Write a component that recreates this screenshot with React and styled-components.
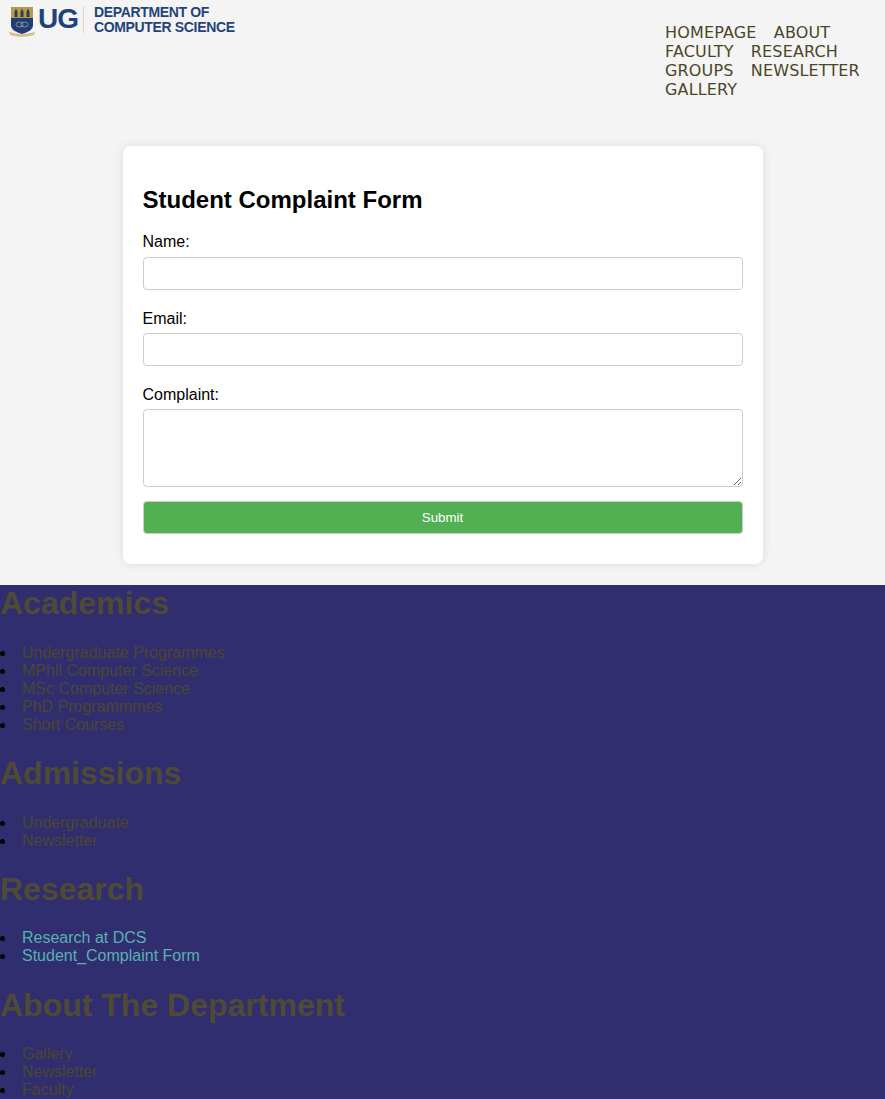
import React from 'react'
import styled, { createGlobalStyle } from 'styled-components'

const navLinks = ['HOMEPAGE', 'ABOUT', 'FACULTY', 'RESEARCH', 'GROUPS', 'NEWSLETTER', 'GALLERY']

const footerSections = [
    {
        title: 'Academics',
        links: ['Undergraduate Programmes', 'MPhil Computer Science', 'MSc Computer Science', 'PhD Programmmes', 'Short Courses'],
    },
    { title: 'Admissions', links: ['Undergraduate', 'Newsletter'] },
    { title: 'Research', links: ['Research at DCS', 'Student_Complaint Form'], visited: true },
    { title: 'About The Department', links: ['Gallery', 'Newsletter', 'Faculty'] },
]

function Crest() {
    return (
        <svg width="26" height="31" viewBox="0 0 26 31">
            <path d="M2 1h22v18c0 5-5 7-11 9C7 26 2 24 2 19z" fill="#1f3f73" />
            <path d="M2 1h22v11H2z" fill="#b79a4e" />
            <path d="M5.500 11V6L7 2.500 8.500 6v5zM11.500 11V6L13 2.500 14.500 6v5zM17.500 11V6L19 2.500 20.500 6v5z" fill="#2b3c55" />
            <ellipse cx="10.500" cy="18.500" rx="3.500" ry="2.500" fill="none" stroke="#7f8ca6" strokeWidth="1" />
            <ellipse cx="15.500" cy="18.500" rx="3.500" ry="2.500" fill="none" stroke="#7f8ca6" strokeWidth="1" />
            <path d="M0 25.500c3 1.500 8 2.500 13 2.500s10-1 13-2.500l-1 3.500c-3 1.200-8 1.800-12 1.800S4 30.200 1 29z" fill="#d8c08a" />
        </svg>
    )
}

function App() {
    return (
        <Page>
            <GlobalStyle />
            <Header>
                <Logo href="#">
                    <Crest />
                    <LogoMark>UG</LogoMark>
                    <LogoRule />
                    <LogoName>DEPARTMENT OF<br />COMPUTER SCIENCE</LogoName>
                </Logo>
                <Nav>
                    {navLinks.map((link) => (
                        <React.Fragment key={link}>
                            <NavLink href="#">{link}</NavLink>{' '}
                        </React.Fragment>
                    ))}
                </Nav>
            </Header>

            <Main>
                <Card>
                    <Title>Student Complaint Form</Title>
                    <form>
                        <Label htmlFor="name">Name:</Label>
                        <Input id="name" type="text" />
                        <Label htmlFor="email">Email:</Label>
                        <Input id="email" type="email" />
                        <Label htmlFor="complaint">Complaint:</Label>
                        <TextArea id="complaint" />
                        <Submit type="button">Submit</Submit>
                    </form>
                </Card>
            </Main>

            <Footer>
                {footerSections.map((section) => (
                    <section key={section.title}>
                        <FooterTitle>{section.title}</FooterTitle>
                        <FooterList>
                            {section.links.map((link) => (
                                <FooterItem key={link}>
                                    <FooterLink href="#" $visited={section.visited}>{link}</FooterLink>
                                </FooterItem>
                            ))}
                        </FooterList>
                    </section>
                ))}
            </Footer>
        </Page>
    )
}

export default App

const GlobalStyle = createGlobalStyle`
    html, body {
        margin: 0;
        background: #f4f4f4;
        font-family: "Liberation Sans", Arial, sans-serif;
    }
`

const Page = styled.div`
    display: flex;
    flex-direction: column;
    height: 100vh;
    overflow: hidden;
`

const Header = styled.header`
    display: flex;
    justify-content: space-between;
    align-items: flex-start;
    height: 126px;
    flex: none;
`

const Logo = styled.a`
    display: flex;
    align-items: center;
    margin: 6px 0 0 9px;
    text-decoration: none;
    color: #1f4379;
`

const LogoMark = styled.span`
    margin: -6px 0 0 3px;
    font-size: 28px;
    line-height: 33px;
    font-weight: bold;
    letter-spacing: -1px;
`

const LogoRule = styled.span`
    align-self: flex-start;
    width: 1px;
    height: 27px;
    margin: 0 10px 0 5px;
    background: #e2d8bf;
`

const LogoName = styled.span`
    align-self: flex-start;
    margin-top: -1px;
    font-size: 14px;
    line-height: 15px;
    font-weight: bold;
    letter-spacing: -0.35px;
    white-space: nowrap;
`

const Nav = styled.nav`
    box-sizing: border-box;
    width: 220px;
    padding-top: 23px;
    font-family: "DejaVu Sans", Verdana, sans-serif;
    font-size: 16px;
    line-height: 19px;
    letter-spacing: 0.15px;
`

const NavLink = styled.a`
    margin-right: 12px;
    color: #4b4629;
    text-decoration: none;
`

const Main = styled.main`
    display: flex;
    justify-content: center;
    flex: none;
    padding: 20px 0 21.2px;
`

const Card = styled.div`
    box-sizing: border-box;
    width: 640px;
    height: 418px;
    padding: 20px;
    background: #fff;
    border-radius: 8px;
    box-shadow: 0 0 10px rgba(0, 0, 0, 0.1);
`

const Title = styled.h2`
    margin: 20px 0 20.4px;
    font-size: 24px;
    line-height: 27px;
    color: #000;
`

const Label = styled.label`
    display: block;
    margin-bottom: 5.2px;
    font-size: 16px;
    line-height: 18px;
    color: #000;
`

const Input = styled.input`
    display: block;
    box-sizing: border-box;
    width: 100%;
    height: 33px;
    margin-bottom: 20px;
    padding: 8px;
    background: #fff;
    border: 1px solid #ccc;
    border-radius: 4px;
`

const TextArea = styled.textarea`
    display: block;
    box-sizing: border-box;
    width: 100%;
    height: 78px;
    margin-bottom: 14px;
    padding: 8px;
    background: #fff;
    border: 1px solid #ccc;
    border-radius: 4px;
`

const Submit = styled.button`
    display: block;
    box-sizing: border-box;
    width: 100%;
    height: 33px;
    padding: 8px;
    background: #52b052;
    border: 1px solid #ccc;
    border-radius: 4px;
    color: #fff;
    font-family: "Liberation Sans", Arial, sans-serif;
    font-size: 13.333px;
`

const Footer = styled.footer`
    flex: 1;
    background: #302e6f;
`

const FooterTitle = styled.h1`
    margin: 21.44px 0;
    font-size: 32px;
    line-height: 37px;
    color: #4f4a35;

    section:first-child & {
        margin-top: 0;
    }
`

const FooterList = styled.ul`
    margin: 21.44px 0;
    padding-left: 22px;
    list-style: none;
    font-size: 16px;
    line-height: 18px;
`

const FooterItem = styled.li`
    position: relative;

    &::before {
        content: "";
        position: absolute;
        left: -22px;
        top: 7px;
        width: 5px;
        height: 5px;
        border-radius: 50%;
        background: #000;
    }
`

const FooterLink = styled.a`
    color: ${(props) => (props.$visited ? '#58b1ae' : '#4b4632')};
    text-decoration: none;
`
